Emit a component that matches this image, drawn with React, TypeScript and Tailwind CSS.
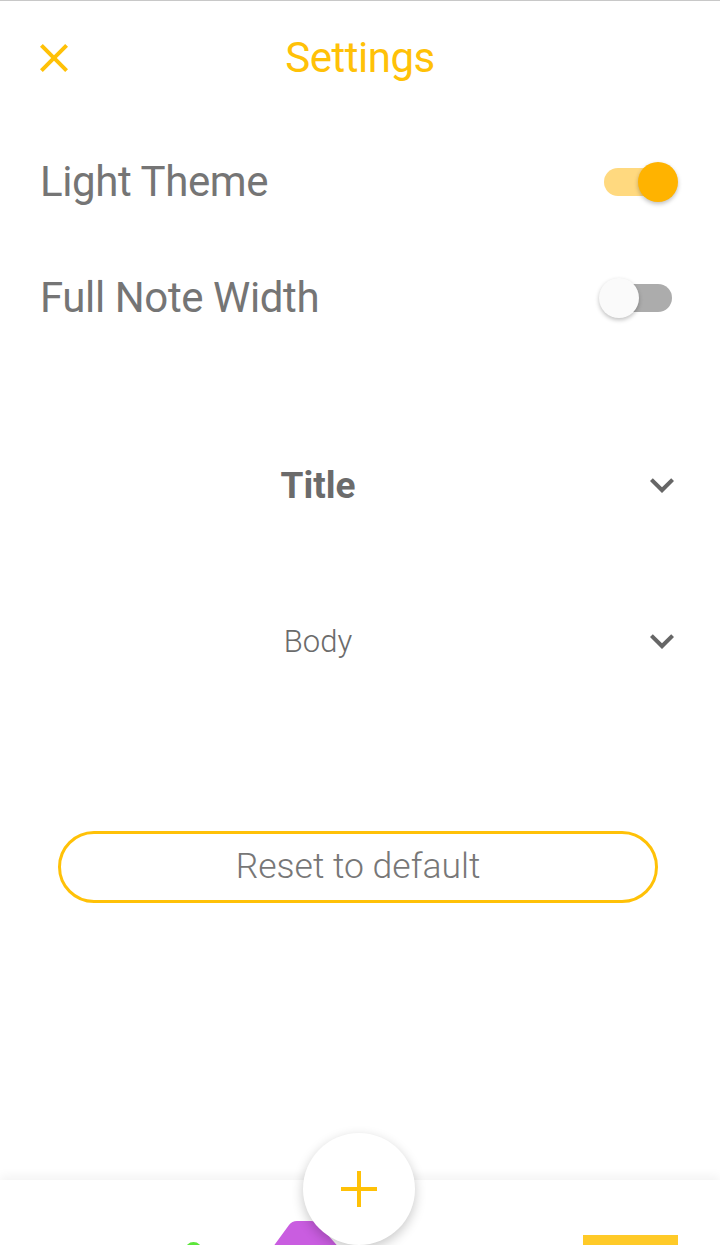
import React from "react";

const amber = "#ffc107";

const CloseIcon = () => (
  <svg width="48" height="48" viewBox="0 0 24 24" fill={amber}>
    <path d="M19 6.41L17.59 5 12 10.59 6.41 5 5 6.41 10.59 12 5 17.59 6.41 19 12 13.41 17.59 19 19 17.59 13.41 12z" />
  </svg>
);

const ExpandMore = () => (
  <svg width="48" height="48" viewBox="0 0 24 24" fill="#666666">
    <path d="M16.59 8.59L12 13.17 7.41 8.59 6 10l6 6 6-6z" />
  </svg>
);

const Toggle = ({ on }: { on: boolean }) => (
  <div className="relative w-[80px] h-[40px] shrink-0">
    <div
      className={
        "absolute left-[5px] top-[6px] w-[68px] h-[28px] rounded-full " +
        (on ? "bg-[#ffd97f]" : "bg-[#acacac]")
      }
    />
    <div
      className={
        "absolute top-0 w-[40px] h-[40px] rounded-full shadow-[0_2px_4px_rgba(0,0,0,0.25)] " +
        (on ? "left-[39px] bg-[#ffb300]" : "left-0 bg-[#fafafa]")
      }
    />
  </div>
);

const SettingRow = ({ label, on }: { label: string; on: boolean }) => (
  <div className="flex items-center justify-between h-[116px] pl-10 pr-[41px]">
    <span className="text-[42px] leading-none text-[#757575] font-normal tracking-[-0.4px]">{label}</span>
    <Toggle on={on} />
  </div>
);

const FontRow = ({ label, bold }: { label: string; bold?: boolean }) => (
  <div className="flex items-center h-[60px]">
    <div
      className={
        "w-[636px] text-center leading-none text-[#6b6b6b] " +
        (bold ? "text-[37px] font-bold" : "text-[31px] font-light")
      }
    >
      {label}
    </div>
    <div className="ml-[2px] flex items-center">
      <ExpandMore />
    </div>
  </div>
);

export default function App() {
  return (
    <div
      className="w-[720px] h-[1245px] bg-white flex flex-col border-t border-[#c8c8c8] overflow-hidden"
      style={{ fontFamily: "Roboto, 'Liberation Sans', sans-serif" }}
    >
      <header className="grid grid-cols-[1fr_auto_1fr] items-center h-[113px]">
        <div className="pl-[30px] flex items-center">
          <CloseIcon />
        </div>
        <h1 className="text-[42px] leading-none font-normal text-[#ffc107] tracking-[-0.5px]">Settings</h1>
        <div />
      </header>

      <div className="mt-[10px]">
        <SettingRow label="Light Theme" on />
        <SettingRow label="Full Note Width" on={false} />
      </div>

      <div className="mt-[99px]">
        <FontRow label="Title" bold />
      </div>
      <div className="mt-[96px]">
        <FontRow label="Body" />
      </div>

      <button className="mt-[160px] ml-[58px] w-[600px] h-[72px] rounded-full border-[3px] border-[#ffc107] text-[35.5px] font-light text-[#777777] leading-none">
        Reset to default
      </button>

      <div className="mt-auto relative h-[65px] bg-white shadow-[0_-4px_10px_rgba(0,0,0,0.05)]">
        <div className="flex h-full overflow-hidden">
          <div className="ml-[185px] mt-[62px] w-[17px] h-[17px] rounded-full bg-[#5ce63a]" />
          <svg className="ml-[68px] mt-[41px]" width="72" height="30" viewBox="0 0 72 30">
            <path d="M0 30 L19 4 Q22 0 27 0 L41 0 Q46 0 49 4 L72 30 Z" fill="#c95de0" />
          </svg>
          <div className="ml-[241px] mt-[55px] w-[95px] h-[12px] bg-[#ffca28]" />
        </div>
        <div className="absolute left-[303px] -top-[47px] w-[112px] h-[112px] rounded-full bg-white shadow-[0_4px_12px_rgba(0,0,0,0.22)] flex items-center justify-center">
          <svg width="36" height="36" viewBox="0 0 36 36" stroke={amber} strokeWidth="4">
            <line x1="18" y1="0" x2="18" y2="36" />
            <line x1="0" y1="18" x2="36" y2="18" />
          </svg>
        </div>
      </div>
    </div>
  );
}
